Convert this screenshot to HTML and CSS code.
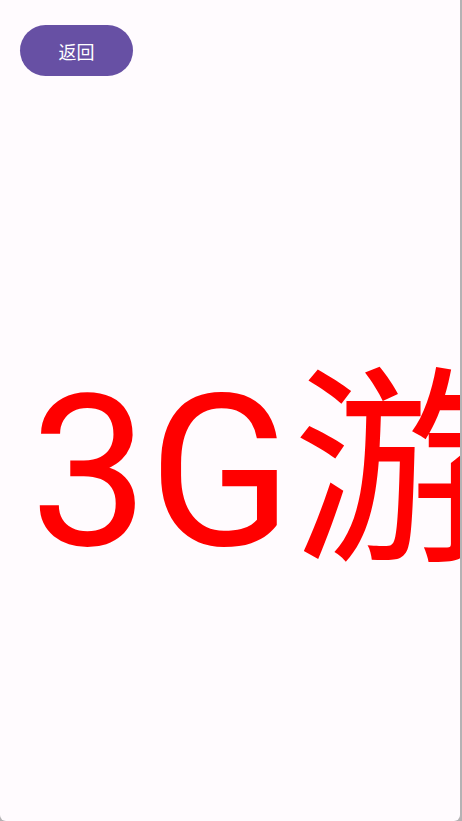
FILE: index.html
```html
<!DOCTYPE html>
<html lang="zh">
<head>
<meta charset="utf-8">
<title>3G</title>
<link rel="stylesheet" href="styles.css">
</head>
<body>
<div class="frame">
  <div class="toolbar">
    <button class="back-btn">返回</button>
  </div>
  <div class="big-text">3G游戏</div>
</div>
</body>
</html>
```
FILE: styles.css
```css
html, body {
  margin: 0;
  padding: 0;
  width: 462px;
  height: 821px;
  background: #b4b2b4;
  overflow: hidden;
}
.frame {
  box-sizing: border-box;
  width: 460px;
  height: 821px;
  background: #fffbfe;
  border-bottom-left-radius: 6px;
  border-bottom-right-radius: 6px;
  overflow: hidden;
  display: flex;
  flex-direction: column;
}
.toolbar {
  padding: 25px 0 0 20px;
  display: flex;
}
.back-btn {
  width: 113px;
  height: 51px;
  border: none;
  border-radius: 26px;
  background: #6750a4;
  color: #ffffff;
  font-family: "Noto Sans CJK SC", Roboto, sans-serif;
  font-size: 18px;
  padding: 0;
  cursor: pointer;
}
.big-text {
  margin-top: 292px;
  padding-left: 30px;
  font-family: Roboto, "Noto Sans CJK SC", sans-serif;
  font-size: 211px;
  line-height: 211px;
  color: #ff0000;
  white-space: nowrap;
}
```
